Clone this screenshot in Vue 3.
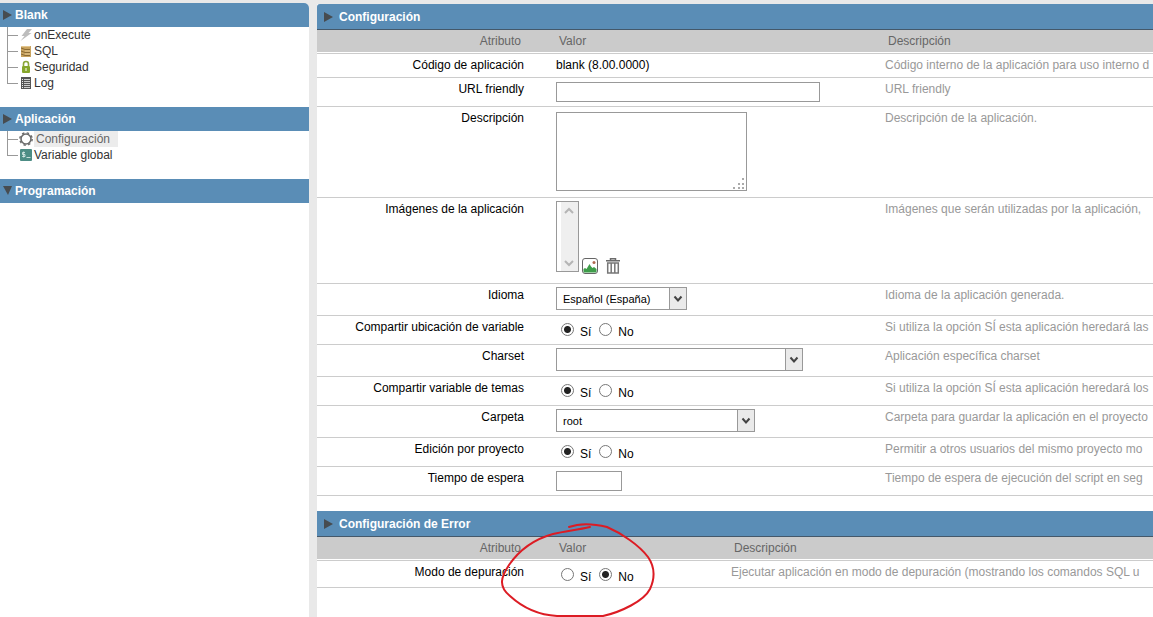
<script setup>
import { ref, reactive } from 'vue'

const menu = [
  {
    title: 'Blank',
    open: false,
    items: [
      { label: 'onExecute', icon: 'bolt' },
      { label: 'SQL', icon: 'sql' },
      { label: 'Seguridad', icon: 'lock' },
      { label: 'Log', icon: 'log' }
    ]
  },
  {
    title: 'Aplicación',
    open: false,
    items: [
      { label: 'Configuración', icon: 'gear', active: true },
      { label: 'Variable global', icon: 'variable' }
    ]
  },
  { title: 'Programación', open: true, items: [] }
]

const sections = [
  {
    title: 'Configuración',
    kind: 'general',
    rows: [
      { id: 'code', label: 'Código de aplicación', type: 'static', help: 'Código interno de la aplicación para uso interno d' },
      { id: 'url', label: 'URL friendly', type: 'text', size: 'wide', help: 'URL friendly' },
      { id: 'description', label: 'Descripción', type: 'area', help: 'Descripción de la aplicación.' },
      { id: 'images', label: 'Imágenes de la aplicación', type: 'images', help: 'Imágenes que serán utilizadas por la aplicación,' },
      { id: 'language', label: 'Idioma', type: 'select', size: 'small', option: 'Español (España)', help: 'Idioma de la aplicación generada.' },
      { id: 'shareLocation', label: 'Compartir ubicación de variable', type: 'radio', help: 'Si utiliza la opción SÍ esta aplicación heredará las' },
      { id: 'charset', label: 'Charset', type: 'select', size: 'large', option: '', help: 'Aplicación específica charset' },
      { id: 'shareTheme', label: 'Compartir variable de temas', type: 'radio', help: 'Si utiliza la opción SÍ esta aplicación heredará los' },
      { id: 'folder', label: 'Carpeta', type: 'select', size: 'medium', option: 'root', help: 'Carpeta para guardar la aplicación en el proyecto' },
      { id: 'projectEdit', label: 'Edición por proyecto', type: 'radio', help: 'Permitir a otros usuarios del mismo proyecto mo' },
      { id: 'timeout', label: 'Tiempo de espera', type: 'text', size: 'narrow', help: 'Tiempo de espera de ejecución del script en seg' }
    ]
  },
  {
    title: 'Configuración de Error',
    kind: 'error',
    rows: [
      { id: 'debug', label: 'Modo de depuración', type: 'radio', help: 'Ejecutar aplicación en modo de depuración (mostrando los comandos SQL u' }
    ]
  }
]

const texts = reactive({ url: '', timeout: '' })
const description = ref('')
const answers = reactive({ shareLocation: 'Sí', shareTheme: 'Sí', projectEdit: 'Sí', debug: 'No' })
</script>

<template>
  <div class="page">
    <nav class="sidebar" aria-label="Menú">
      <section v-for="group in menu" :key="group.title" class="group">
        <h2 class="group-title">
          <svg class="arrow" width="10" height="10" viewBox="0 0 10 10" aria-hidden="true">
            <path :d="group.open ? 'M0 0h9L5 9z' : 'M0 0l9 5-9 5z'" />
          </svg>
          {{ group.title }}
        </h2>
        <ul v-if="group.items.length" class="tree">
          <li v-for="item in group.items" :key="item.label" class="node">
            <a href="#" class="link" :class="{ active: item.active }">
              <svg v-if="item.icon === 'bolt'" width="14" height="14" viewBox="0 0 14 14" aria-hidden="true">
                <path d="M8 1h5L9.500 5h3L1.500 13l4-5H2.500z" fill="#bdbdbd" />
              </svg>
              <svg v-else-if="item.icon === 'sql'" width="14" height="14" viewBox="0 0 14 14" aria-hidden="true">
                <path d="M2 2h10v11H2z" fill="#c9a35f" />
                <path d="M2 4l4 1.500h5M2 7l4 1.500h5M2 10l4 1.500h5" fill="none" stroke="#8a6a33" />
                <path d="M2 2.500h9M6 7h5M6 10h5" stroke="#e3c68e" />
              </svg>
              <svg v-else-if="item.icon === 'lock'" width="14" height="14" viewBox="0 0 14 14" aria-hidden="true">
                <path d="M4.500 6V4a2.500 2.500 0 0 1 5 0v2" fill="none" stroke="#8aa638" stroke-width="1.600" />
                <rect x="3" y="6" width="8" height="7" rx="1" fill="#86a62b" />
                <path d="M6.500 8h1v3h-1z" fill="#fff" />
              </svg>
              <svg v-else-if="item.icon === 'log'" width="14" height="14" viewBox="0 0 14 14" aria-hidden="true">
                <path d="M2 1h10v12H2z" fill="#555" />
                <path d="M5 3.500h6M5 5.500h6M5 7.500h6M5 9.500h6M5 11.500h6" stroke="#ccc" />
                <path d="M3 3.500h1M3 5.500h1M3 7.500h1M3 9.500h1M3 11.500h1" stroke="#eee" />
              </svg>
              <svg v-else-if="item.icon === 'gear'" width="14" height="14" viewBox="0 0 14 14" aria-hidden="true">
                <circle cx="7" cy="7" r="5" fill="none" stroke="#6b6b6b" stroke-width="1.600" />
                <circle cx="7" cy="7" r="6.200" fill="none" stroke="#6b6b6b" stroke-width="1.400" stroke-dasharray="2.400 2.470" />
              </svg>
              <svg v-else width="14" height="14" viewBox="0 0 14 14" aria-hidden="true">
                <rect x="1" y="1" width="12" height="12" rx="1" fill="#4d8d85" />
                <path d="M6 4.500H3.500v2H6v2H3.200M4.700 3.500v6M7.500 9.500h4" fill="none" stroke="#d5e8e4" stroke-width="0.900" />
              </svg>
              <span class="link-text">{{ item.label }}</span>
            </a>
          </li>
        </ul>
      </section>
    </nav>

    <main class="content">
      <section v-for="section in sections" :key="section.title" class="panel" :class="section.kind">
        <h2 class="panel-title">
          <svg class="arrow" width="10" height="10" viewBox="0 0 10 10" aria-hidden="true">
            <path d="M0 0l9 5-9 5z" />
          </svg>
          {{ section.title }}
        </h2>
        <table class="grid">
          <colgroup>
            <col class="col-name" />
            <col class="col-value" />
            <col />
          </colgroup>
          <thead>
            <tr>
              <th class="name"><div>Atributo</div></th>
              <th><div>Valor</div></th>
              <th><div>Descripción</div></th>
            </tr>
          </thead>
          <tbody>
            <tr v-for="row in section.rows" :key="row.id">
              <td class="name"><label :id="row.id + '-label'" :for="row.id">{{ row.label }}</label></td>
              <td class="value" :class="row.type">
                <output v-if="row.type === 'static'" :id="row.id">blank (8.00.0000)</output>
                <input v-else-if="row.type === 'text'" :id="row.id" v-model="texts[row.id]" type="text" class="field" :class="row.size" />
                <div v-else-if="row.type === 'area'" class="area-box">
                  <textarea :id="row.id" v-model="description" class="field"></textarea>
                  <svg class="grip" width="12" height="12" viewBox="0 0 12 12" aria-hidden="true">
                    <path d="M9 0h2v2H9zM5 5h2v2H5zM9 5h2v2H9zM0 9h2v2H0zM5 9h2v2H5zM9 9h2v2H9z" />
                  </svg>
                </div>
                <div v-else-if="row.type === 'images'" class="image-tools">
                  <div class="list-box">
                    <select :id="row.id" multiple class="field"></select>
                    <svg class="scroll" width="17" height="69" viewBox="0 0 17 69" aria-hidden="true">
                      <path d="M0 0h17v69H0z" fill="#efefef" />
                      <path d="M4 11l4-4 4 4M4 59l4 4 4-4" fill="none" stroke="#b5b5b5" stroke-width="2" />
                    </svg>
                  </div>
                  <button type="button" class="tool" aria-label="Elegir imagen">
                    <svg width="16" height="16" viewBox="0 0 16 16" aria-hidden="true">
                      <rect x="0.500" y="0.500" width="15" height="15" rx="2.500" fill="#fff" stroke="#666" />
                      <path d="M1.500 11l1.500-1 1.500 1L6 8.500l1.500-2.500L9 8.500l1.500 1.500 1.500-1 2.500 2v2.500q0 1-1 1H2.500q-1 0-1-1z" fill="#3f9d4a" />
                      <circle cx="12" cy="4.500" r="1.500" fill="#b0684f" />
                    </svg>
                  </button>
                  <button type="button" class="tool" aria-label="Eliminar imagen">
                    <svg width="14" height="16" viewBox="0 0 14 16" aria-hidden="true">
                      <path d="M4.500 2V.7h5V2M0 2.700h14" fill="none" stroke="#6b6b6b" stroke-width="1.500" />
                      <path d="M1.700 5h10.600v10H1.700zM5.200 5v10M8.800 5v10" fill="none" stroke="#777" stroke-width="1.500" />
                    </svg>
                  </button>
                </div>
                <div v-else-if="row.type === 'select'" class="select-box" :class="row.size">
                  <select :id="row.id" class="field">
                    <option>{{ row.option }}</option>
                  </select>
                  <svg class="drop" width="18" height="23" viewBox="0 0 18 23" aria-hidden="true">
                    <rect x="0.500" y="0.500" width="17" height="22" fill="#eaeaea" stroke="#999" />
                    <path d="M5.500 9.500l3.500 4 3.500-4" fill="none" stroke="#444" stroke-width="2" />
                  </svg>
                </div>
                <div v-else :id="row.id" class="choices" role="radiogroup" :aria-labelledby="row.id + '-label'">
                  <label v-for="choice in ['Sí', 'No']" :key="choice" class="choice">
                    <input v-model="answers[row.id]" type="radio" :name="row.id" :value="choice" />
                    <span>{{ choice }}</span>
                  </label>
                </div>
              </td>
              <td class="help">{{ row.help }}</td>
            </tr>
          </tbody>
        </table>
        <svg v-if="section.kind === 'error'" class="mark" width="340" height="106" viewBox="0 0 340 106" aria-hidden="true">
          <path d="M252 16C260 13 274 12 290 16C304 22 322 34 331 46C338 56 338 67 333 78C327 90 304 101 286 105H240C222 104 205 96 193 85C181 75 184 66 192 54C203 38 218 28 236 23C249 20 260 19 273 16" />
        </svg>
      </section>
    </main>
  </div>
</template>

<style>
html,
body {
  margin: 0;
  overflow: hidden;
}
</style>

<style scoped>
.page {
  display: grid;
  grid-template-columns: 309px minmax(0, 1fr);
  gap: 8px;
  box-sizing: border-box;
  min-height: 100vh;
  padding-top: 3px;
  background: #e9e9e9;
  font-family: "Liberation Sans", Arial, sans-serif;
  font-size: 12px;
  line-height: 14px;
  color: #000;
}

.sidebar {
  background: #fff;
  border-radius: 0 5px 0 0;
}

.group {
  margin-bottom: 16px;
}

.group-title,
.panel-title {
  display: flex;
  align-items: center;
  margin: 0;
  background: #5a8db6;
  color: #fff;
  font-size: 12px;
  font-weight: bold;
}

.group-title {
  gap: 2px;
  height: 24px;
  padding-left: 3px;
}

.group:first-child .group-title {
  border-radius: 0 5px 0 0;
}

.arrow {
  fill: #474c50;
}

.tree {
  margin: 0;
  padding: 0;
  list-style: none;
}

.node {
  position: relative;
  height: 16px;
}

.node::before {
  content: "";
  position: absolute;
  left: 7px;
  top: 0;
  width: 10px;
  height: 8px;
  border-left: 1px solid #999;
  border-bottom: 1px solid #999;
}

.node:not(:last-child)::after {
  content: "";
  position: absolute;
  left: 7px;
  top: 8px;
  height: 8px;
  border-left: 1px solid #999;
}

.link {
  display: flex;
  align-items: center;
  gap: 1px;
  height: 16px;
  padding-left: 19px;
  color: #333;
  text-decoration: none;
}

.link-text {
  line-height: 16px;
}

.active .link-text {
  padding: 0 8px 0 2px;
  background: #ececec;
  color: #666;
}

.content {
  margin-top: 1px;
  background: #fff;
}

.panel {
  position: relative;
  margin-bottom: 15px;
}

.panel-title {
  gap: 5px;
  height: 25px;
  padding-left: 7px;
  border-bottom: 1px solid #44586a;
}

.general .panel-title {
  border-top-left-radius: 3px;
}

.grid {
  width: 100%;
  table-layout: fixed;
  border-collapse: separate;
  border-spacing: 0;
}

.col-name {
  width: 223px;
}

.general .col-value {
  width: 329px;
}

.error .col-value {
  width: 175px;
}

th {
  padding: 0 0 1px;
  border-bottom: 1px solid #ccc;
  color: #666;
  font-weight: normal;
  text-align: left;
}

th div {
  padding: 4px 19px;
  background: #cbcbcb;
}

td {
  padding: 4px 16px 5px;
  border-bottom: 1px solid #ccc;
  vertical-align: top;
  white-space: nowrap;
}

.name {
  text-align: right;
}

.help {
  padding-right: 0;
  overflow: hidden;
  color: #999;
}

.value {
  padding-right: 0;
}

.text {
  padding-bottom: 4px;
}

.area {
  padding-top: 5px;
  padding-bottom: 6px;
}

.images {
  padding-top: 3px;
  padding-bottom: 11px;
}

.select {
  padding-top: 3px;
}

.field {
  display: block;
  box-sizing: border-box;
  width: 100%;
  height: 100%;
  margin: 0;
  padding: 0 6px;
  border: 1px solid #999;
  border-radius: 0;
  outline: 0;
  background: #fff;
  color: #000;
  font-family: inherit;
  font-size: 11px;
  appearance: none;
  resize: none;
}

.text .field {
  height: 20px;
}

.text .wide {
  width: 264px;
}

.text .narrow {
  width: 66px;
}

.area-box {
  position: relative;
  width: 191px;
  height: 79px;
}

.grip {
  position: absolute;
  right: 2px;
  bottom: 1px;
  fill: #aaa;
}

.image-tools {
  display: flex;
  align-items: flex-end;
}

.list-box {
  position: relative;
  width: 23px;
  height: 71px;
  margin-right: 3px;
}

.list-box .field {
  overflow: hidden;
}

.scroll {
  position: absolute;
  top: 1px;
  right: 1px;
}

.tool {
  display: block;
  height: 16px;
  margin: 0 8px -2px 0;
  padding: 0;
  border: 0;
  background: none;
}

.tool svg {
  display: block;
}

.select-box {
  position: relative;
  height: 23px;
}

.select-box.small {
  width: 131px;
}

.select-box.medium {
  width: 199px;
}

.select-box.large {
  width: 247px;
}

.drop {
  position: absolute;
  top: 0;
  right: 0;
  pointer-events: none;
}

.radio {
  padding-top: 7px;
  padding-bottom: 5px;
}

.choices {
  display: flex;
  gap: 8px;
  padding-left: 5px;
}

.choice {
  display: flex;
  align-items: flex-start;
  gap: 6px;
}

.choice input {
  box-sizing: border-box;
  width: 13px;
  height: 13px;
  margin: 0;
  border: 1px solid #777;
  border-radius: 50%;
  background: #fff;
  appearance: none;
}

.choice input:checked {
  background: radial-gradient(circle, #222 0 3px, #fff 4px);
}

.choice span {
  padding-top: 2px;
  line-height: 14px;
}

.error .radio {
  padding-bottom: 3px;
}

.mark {
  position: absolute;
  left: 0;
  top: 0;
  pointer-events: none;
}

.mark path {
  fill: none;
  stroke: #dc1c24;
  stroke-width: 2;
  stroke-linecap: round;
}
</style>
